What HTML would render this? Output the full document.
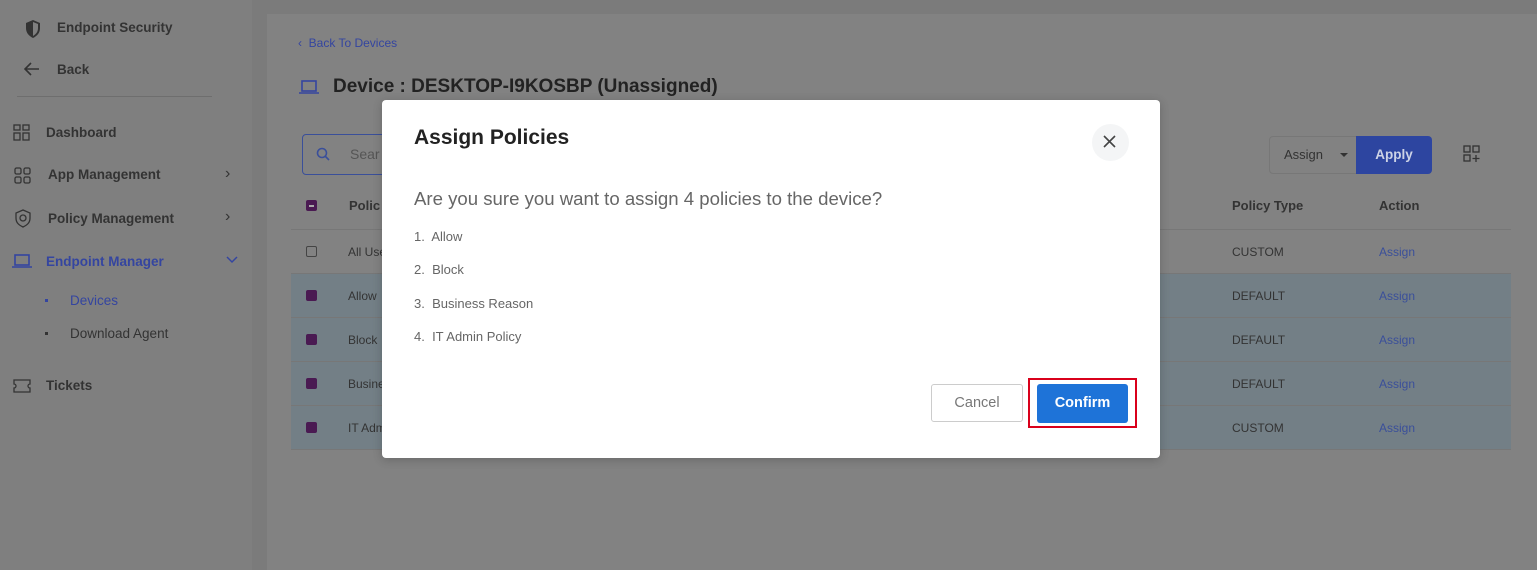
<!DOCTYPE html>
<html><head><style>
*{margin:0;padding:0;box-sizing:border-box}
body{width:1537px;height:570px;overflow:hidden;background:#7b7b7b;font-family:"Liberation Sans",sans-serif;position:relative}
.a{position:absolute;white-space:nowrap}
.side{left:0;top:0;width:252px;height:570px;background:#7f7f7f}
.main{left:267px;top:14px;width:1270px;height:556px;background:#828282}
.sb{font-size:13.5px;font-weight:bold;color:#333}
.row{left:291px;width:1220px;height:44px;border-bottom:1px solid #777}
.sel{background:#737f86}
.cb{width:11px;height:11px;border-radius:2px;background:#4a1a52}
.cell{font-size:12px;color:#333}
.lnk{font-size:12px;color:#3a4f9a}
</style></head><body>
<div class="a side"></div>
<div class="a main"></div>
<svg class="a" style="left:24px;top:19px" width="18" height="20" viewBox="0 0 18 20"><path d="M9 1L2 4v5c0 5 3 8 7 10 4-2 7-5 7-10V4z" fill="#333"/><path d="M9 3v14c3-2 5-4 5-8V5z" fill="#7f7f7f"/></svg>
<div class="a sb" style="left:57px;top:20px">Endpoint Security</div>
<svg class="a" style="left:24px;top:62px" width="16" height="14" viewBox="0 0 16 14"><path d="M15 7H2M7 1L1 7l6 6" stroke="#333" stroke-width="1.6" fill="none"/></svg>
<div class="a sb" style="left:57px;top:62px">Back</div>
<div class="a" style="left:17px;top:96px;width:195px;height:1px;background:#6e6e6e"></div>
<svg class="a" style="left:13px;top:124px" width="17" height="17" viewBox="0 0 17 17" fill="none" stroke="#333" stroke-width="1.3"><rect x="1" y="1" width="6" height="5"/><rect x="10" y="1" width="6" height="5"/><rect x="1" y="9" width="6" height="7"/><rect x="10" y="9" width="6" height="7"/></svg>
<div class="a sb" style="left:46px;top:125px">Dashboard</div>
<svg class="a" style="left:14px;top:167px" width="17" height="17" viewBox="0 0 17 17" fill="none" stroke="#333" stroke-width="1.3"><rect x="1" y="1" width="6" height="6" rx="1.5"/><rect x="10" y="1" width="6" height="6" rx="1.5"/><rect x="1" y="10" width="6" height="6" rx="1.5"/><rect x="10" y="10" width="6" height="6" rx="1.5"/></svg>
<div class="a sb" style="left:48px;top:167px">App Management</div>
<div class="a sb" style="left:225px;top:165px;font-weight:normal;font-size:16px">›</div>
<svg class="a" style="left:14px;top:209px" width="18" height="19" viewBox="0 0 18 19" fill="none" stroke="#333" stroke-width="1.3"><path d="M9 1L2 4v5c0 5 3 7 7 9 4-2 7-4 7-9V4z"/><circle cx="9" cy="9" r="3"/></svg>
<div class="a sb" style="left:48px;top:211px">Policy Management</div>
<div class="a sb" style="left:225px;top:208px;font-weight:normal;font-size:16px">›</div>
<svg class="a" style="left:12px;top:254px" width="20" height="15" viewBox="0 0 20 15" fill="none" stroke="#3445a0" stroke-width="1.6"><rect x="3" y="1" width="14" height="10"/><path d="M0 13h20"/></svg>
<div class="a sb" style="left:46px;top:254px;color:#3445a0">Endpoint Manager</div>
<svg class="a" style="left:226px;top:256px" width="12" height="8" viewBox="0 0 12 8"><path d="M1 1l5 5 5-5" stroke="#3445a0" stroke-width="1.5" fill="none"/></svg>
<div class="a" style="left:45px;top:299px;width:3px;height:3px;background:#3445a0"></div>
<div class="a sb" style="left:70px;top:293px;color:#3445a0;font-weight:normal">Devices</div>
<div class="a" style="left:45px;top:332px;width:3px;height:3px;background:#333"></div>
<div class="a sb" style="left:70px;top:326px;font-weight:normal">Download Agent</div>
<svg class="a" style="left:13px;top:379px" width="18" height="14" viewBox="0 0 18 14" fill="none" stroke="#333" stroke-width="1.3"><path d="M1 1h16v4a2 2 0 0 0 0 4v4H1V9a2 2 0 0 0 0-4z"/></svg>
<div class="a sb" style="left:46px;top:378px">Tickets</div>
<div class="a" style="left:298px;top:36px;font-size:12px;color:#3445a0">‹ &nbsp;Back To Devices</div>
<svg class="a" style="left:299px;top:80px" width="20" height="15" viewBox="0 0 20 15" fill="none" stroke="#3445a0" stroke-width="1.6"><rect x="3" y="1" width="14" height="10"/><path d="M0 13h20"/></svg>
<div class="a" style="left:333px;top:76px;font-size:19px;font-weight:bold;color:#222">Device : DESKTOP-I9KOSBP (Unassigned)</div>
<div class="a" style="left:302px;top:134px;width:90px;height:41px;border:1px solid #3a4f9a;border-radius:4px"></div>
<svg class="a" style="left:316px;top:147px" width="14" height="14" viewBox="0 0 14 14" fill="none" stroke="#3a4f9a" stroke-width="1.6"><circle cx="6" cy="6" r="4.5"/><path d="M9.5 9.5L13 13"/></svg>
<div class="a" style="left:350px;top:146px;font-size:14px;color:#555">Sear</div>
<div class="a" style="left:1269px;top:136px;width:90px;height:38px;border:1px solid #777;border-radius:4px 0 0 4px"></div>
<div class="a" style="left:1284px;top:147px;font-size:13px;color:#333">Assign</div>
<div class="a" style="left:1340px;top:153px;border:4px solid transparent;border-top:4px solid #333"></div>
<div class="a" style="left:1356px;top:136px;width:76px;height:38px;background:#2d45a0;border-radius:0 4px 4px 0;color:#cdd3e6;font-size:13.5px;font-weight:bold;text-align:center;line-height:38px">Apply</div>
<svg class="a" style="left:1463px;top:145px" width="18" height="18" viewBox="0 0 18 18" fill="none" stroke="#333" stroke-width="1.3"><rect x="1" y="1" width="6" height="6"/><rect x="10" y="1" width="6" height="6"/><rect x="1" y="10" width="6" height="6"/><path d="M13 10v7M9.5 13.5h7"/></svg>
<div class="a" style="left:291px;top:229px;width:1220px;height:1px;background:#777"></div>
<div class="a cb" style="left:306px;top:200px"><div style="margin:5px 3px;height:1.5px;background:#aaa"></div></div>
<div class="a" style="left:349px;top:198px;font-size:13px;font-weight:bold;color:#333">Polic</div>
<div class="a" style="left:1232px;top:198px;font-size:13px;font-weight:bold;color:#333">Policy Type</div>
<div class="a" style="left:1379px;top:198px;font-size:13px;font-weight:bold;color:#333">Action</div>
<div class="a row" style="top:230px"></div>
<div class="a" style="left:306px;top:246px;width:11px;height:11px;border:1px solid #444;border-radius:2px"></div>
<div class="a cell" style="left:348px;top:245px">All Use</div>
<div class="a cell" style="left:1232px;top:245px">CUSTOM</div><div class="a lnk" style="left:1379px;top:245px">Assign</div>
<div class="a row sel" style="top:274px"></div>
<div class="a row sel" style="top:318px"></div>
<div class="a row sel" style="top:362px"></div>
<div class="a row sel" style="top:406px"></div>
<div class="a cb" style="left:306px;top:290px"></div><div class="a cell" style="left:348px;top:289px">Allow</div>
<div class="a cb" style="left:306px;top:334px"></div><div class="a cell" style="left:348px;top:333px">Block</div>
<div class="a cb" style="left:306px;top:378px"></div><div class="a cell" style="left:348px;top:377px">Busine</div>
<div class="a cb" style="left:306px;top:422px"></div><div class="a cell" style="left:348px;top:421px">IT Adm</div>
<div class="a cell" style="left:1232px;top:289px">DEFAULT</div><div class="a lnk" style="left:1379px;top:289px">Assign</div>
<div class="a cell" style="left:1232px;top:333px">DEFAULT</div><div class="a lnk" style="left:1379px;top:333px">Assign</div>
<div class="a cell" style="left:1232px;top:377px">DEFAULT</div><div class="a lnk" style="left:1379px;top:377px">Assign</div>
<div class="a cell" style="left:1232px;top:421px">CUSTOM</div><div class="a lnk" style="left:1379px;top:421px">Assign</div>
<div class="a" style="left:382px;top:100px;width:778px;height:358px;background:#fff;border-radius:4px;box-shadow:0 2px 10px rgba(0,0,0,.2)"></div>
<div class="a" style="left:414px;top:126px;font-size:21px;font-weight:bold;color:#222">Assign Policies</div>
<div class="a" style="left:1092px;top:124px;width:37px;height:37px;border-radius:50%;background:#f4f5f6"></div>
<svg class="a" style="left:1103px;top:135px" width="13" height="13" viewBox="0 0 13 13"><path d="M1 1l11 11M12 1L1 12" stroke="#444" stroke-width="1.6"/></svg>
<div class="a" style="left:414px;top:188px;font-size:18.6px;color:#666">Are you sure you want to assign 4 policies to the device?</div>
<div class="a" style="left:414px;top:229px;font-size:13px;color:#666">1.&nbsp; Allow</div>
<div class="a" style="left:414px;top:262px;font-size:13px;color:#666">2.&nbsp; Block</div>
<div class="a" style="left:414px;top:296px;font-size:13px;color:#666">3.&nbsp; Business Reason</div>
<div class="a" style="left:414px;top:329px;font-size:13px;color:#666">4.&nbsp; IT Admin Policy</div>
<div class="a" style="left:931px;top:384px;width:92px;height:38px;border:1px solid #ccc;border-radius:3px;font-size:14.5px;color:#777;text-align:center;line-height:36px">Cancel</div>
<div class="a" style="left:1028px;top:378px;width:109px;height:50px;border:2px solid #d9001b"></div>
<div class="a" style="left:1037px;top:384px;width:91px;height:39px;background:#1e73d8;border-radius:3px;font-size:14.5px;font-weight:bold;color:#fff;text-align:center;line-height:39px">Confirm</div>
</body></html>
